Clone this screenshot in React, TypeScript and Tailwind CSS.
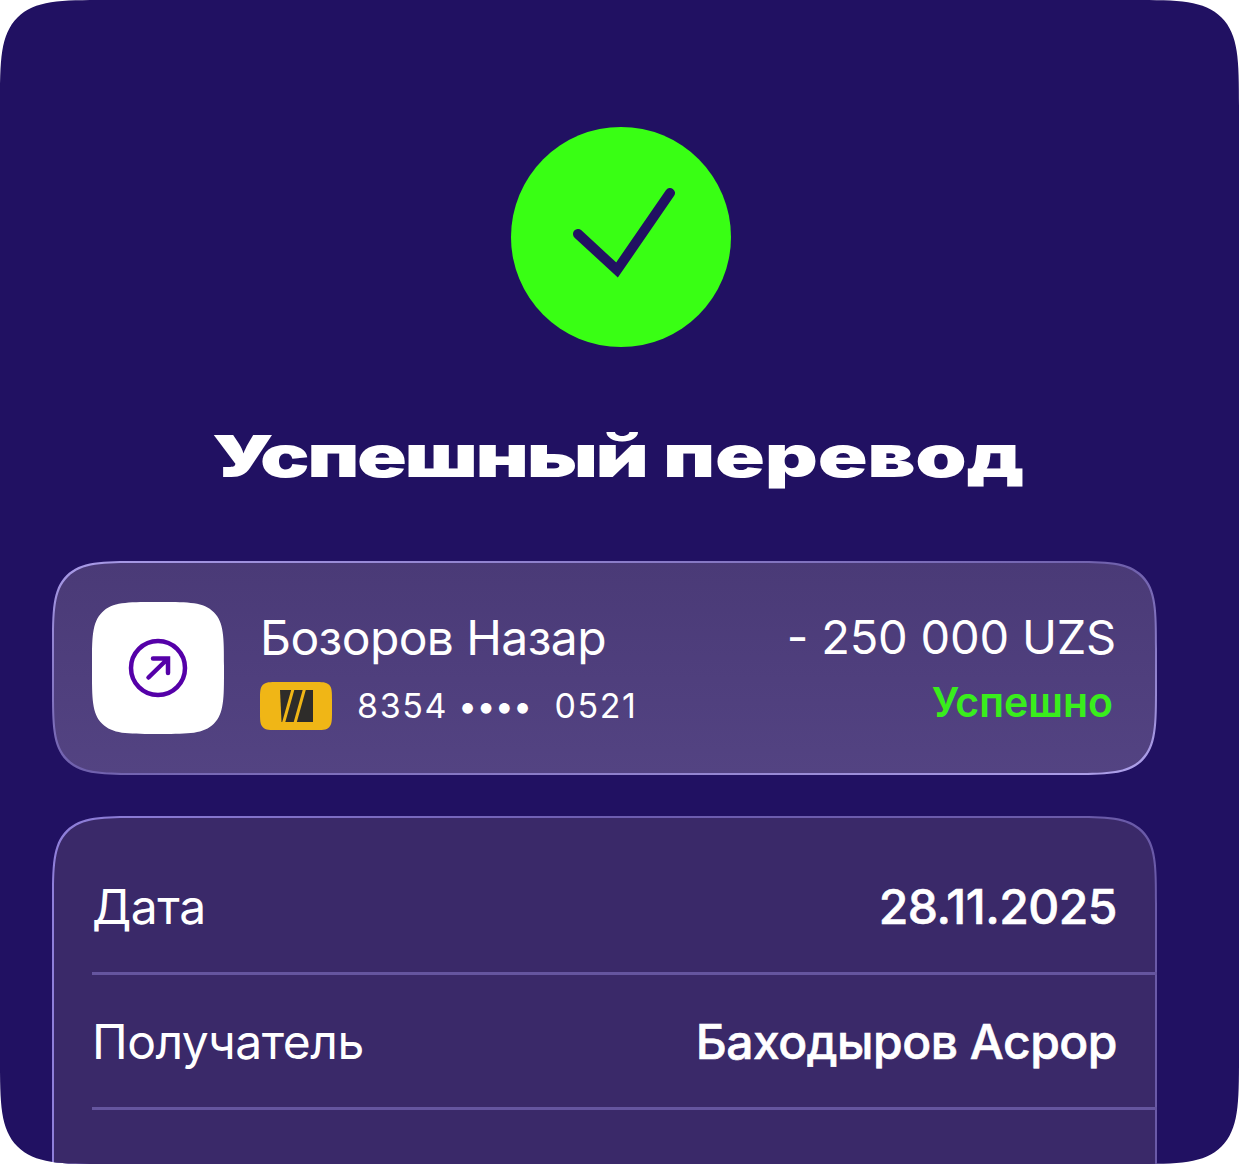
import React from "react";

function CheckBadge() {
  return (
    <div className="flex h-[220px] w-[220px] items-center justify-center rounded-full bg-[#39ff14]">
      <svg width="220" height="220" viewBox="0 0 220 220" fill="none">
        <path
          d="M67 107L106 143L159 66"
          stroke="#211162"
          strokeWidth="10"
          strokeLinecap="round"
          strokeLinejoin="miter"
        />
      </svg>
    </div>
  );
}

function ArrowIcon() {
  return (
    <svg width="60" height="60" viewBox="0 0 60 60" fill="none">
      <circle cx="30" cy="30" r="27" stroke="#5500a8" strokeWidth="4.5" />
      <path
        d="M20.5 39.5L39 21.5M25 20.5H40V35"
        stroke="#5500a8"
        strokeWidth="4.5"
        strokeLinecap="round"
      />
    </svg>
  );
}

function CardChip() {
  return (
    <div className="flex h-[48px] w-[72px] items-center justify-center rounded-[18px] bg-[#f0b616] [corner-shape:squircle]">
      <svg width="33" height="32" viewBox="0 0 33 32">
        <path d="M0 0H33V32H1.5L0 0Z" fill="#2e2c2a" />
        <path d="M13 -1L3.5 33M24.5 -1L15 33" stroke="#f0b616" strokeWidth="3" />
      </svg>
    </div>
  );
}

function Row({ label, value }: { label: string; value: string }) {
  return (
    <div className="flex flex-col">
      <div className="flex h-[132px] items-center justify-between pr-[38px] pt-[1px] text-[48px] leading-[56px] text-white">
        <span className="tracking-[-0.5px]">{label}</span>
        <span className="font-medium tracking-[-0.5px] [-webkit-text-stroke:0.6px_white]">{value}</span>
      </div>
      <div className="-mr-[2px] h-[3px] bg-[#65559f]" />
    </div>
  );
}

export default function App() {
  return (
    <div className="h-[1164px] w-[1239px] overflow-hidden bg-white font-['Inter',sans-serif]">
      <div className="flex h-full flex-col items-center overflow-hidden rounded-[110px] bg-[#211162] pt-[127px] [corner-shape:squircle]">
        <div className="pl-[3px]">
          <CheckBadge />
        </div>

        <h1 className="mt-[74px] h-[70px] origin-center -translate-x-[2px] scale-x-[1.42] text-[58px] leading-[70px] font-black text-white">
          <span className="tracking-[-1.7px]">Успешный</span>{" "}
          <span className="tracking-[-0.2px]">перевод</span>
        </h1>

        {/* Payment card */}
        <div className="mt-[70px] ml-[52px] h-[214px] w-[1105px] shrink-0 self-start rounded-[90px] bg-linear-to-br from-[#a99be8] via-[#6f60ac] to-[#b0a2ec] p-[2px] [corner-shape:squircle]">
          <div className="flex h-full items-center rounded-[88px] bg-linear-to-b from-[#4a3a77] to-[#534382] pl-[38px] pr-[39px] [corner-shape:squircle]">
            <div className="flex h-[132px] w-[132px] shrink-0 items-center justify-center rounded-[64px] bg-white [corner-shape:squircle]">
              <ArrowIcon />
            </div>

            <div className="ml-[36px] flex flex-col pt-[3px]">
              <span className="text-[48px] leading-[56px] tracking-[-0.6px] text-white">
                Бозоров Назар
              </span>
              <div className="mt-[16px] flex items-center text-[34px] leading-[44px] tracking-[1.6px] text-white">
                <CardChip />
                <span className="ml-[25px]">8354</span>
                <span className="ml-[10px] tracking-[-0.8px]">••••</span>
                <span className="ml-[23px]">0521</span>
              </div>
            </div>

            <div className="ml-auto flex flex-col items-end pb-[4px]">
              <span className="text-[47px] leading-[56px] tracking-[-0.2px] text-white">
                - 250 000 UZS
              </span>
              <span className="mt-[15px] pr-[3px] text-[41px] leading-[44px] font-semibold text-[#39ee1c]">
                Успешно
              </span>
            </div>
          </div>
        </div>

        {/* Details */}
        <div className="mt-[41px] ml-[52px] h-[420px] w-[1105px] shrink-0 self-start rounded-t-[90px] bg-linear-to-r from-[#8f7fda] via-[#6d5db0] to-[#6a5aa8] p-[2px] pb-0 [corner-shape:squircle]">
          <div className="h-full rounded-t-[88px] bg-[#3a2969] pl-[38px] pt-[22px] [corner-shape:squircle]">
            <Row label="Дата" value="28.11.2025" />
            <Row label="Получатель" value="Баходыров Асрор" />
          </div>
        </div>
      </div>
    </div>
  );
}
